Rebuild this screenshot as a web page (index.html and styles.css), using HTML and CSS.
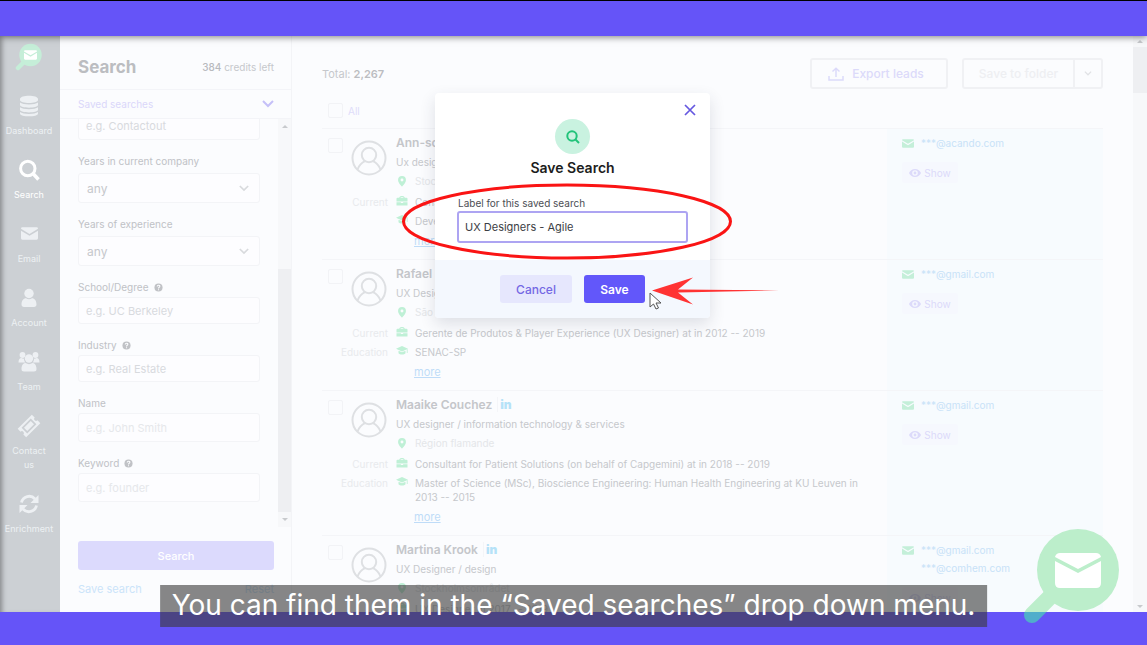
FILE: index.html
```
<!DOCTYPE html>
<html lang="en">
<head>
  <meta charset="UTF-8" />
  <meta name="viewport" content="width=device-width, initial-scale=1" />
  <title>Save Search</title>
  <link rel="stylesheet" href="styles.css">
</head>
<body>

  <!-- shared icons -->
  <svg class="sprite" aria-hidden="true">
    <symbol id="i-mail" viewBox="0 0 18 13">
      <path d="M1.5 0h15A1.5 1.5 0 0 1 18 1.500L9 7 0 1.500A1.500 1.500 0 0 1 1.500 0z" />
      <path d="M0 3.500L9 9l9-5.500v8a1.500 1.500 0 0 1-1.500 1.500h-15A1.500 1.500 0 0 1 0 11.500z" />
    </symbol>
    <symbol id="i-avatar" viewBox="0 0 36 36">
      <g fill="none" stroke="currentColor" stroke-width="2">
        <circle cx="18" cy="18" r="16.500" />
        <circle cx="18" cy="15" r="7.200" />
        <path d="M6.500 29.500C8.500 24.500 11 22.500 14 21.200M29.500 29.500c-2-5-4.500-7-7.500-8.300" />
      </g>
    </symbol>
    <symbol id="i-pin" viewBox="0 0 10 12">
      <path fill-rule="evenodd" d="M5 0a4.300 4.300 0 0 1 4.300 4.300C9.300 7.500 5 11.500 5 11.500S.7 7.500.7 4.300A4.300 4.300 0 0 1 5 0zm0 2.700a1.600 1.600 0 1 0 0 3.200 1.600 1.600 0 0 0 0-3.200z" />
    </symbol>
    <symbol id="i-case" viewBox="0 0 10 10">
      <path fill-rule="evenodd" d="M2.500 2.500C2.500.5 7.500.5 7.500 2.500H9a1 1 0 0 1 1 1v2.300H0V3.500a1 1 0 0 1 1-1zm1.200 0h2.600c0-.8-2.600-.8-2.600 0zM0 6.500h4v.8h2v-.8h4v3H0z" />
    </symbol>
    <symbol id="i-cap" viewBox="0 0 12 10">
      <path d="M6 .5l6 2.700-6 2.700-6-2.700zM2.500 5.200L6 6.800l3.500-1.600v2.500C8.500 9.500 3.500 9.500 2.500 7.700zM10.800 4l.8-.4v4h-.8z" />
    </symbol>
    <symbol id="i-eye" viewBox="0 0 12 8">
      <path fill-rule="evenodd" d="M6 0c3 0 5 2 6 4-1 2-3 4-6 4S1 6 0 4c1-2 3-4 6-4zm0 1.200a2.800 2.800 0 1 0 0 5.600 2.800 2.800 0 0 0 0-5.600zm0 1.400a1.400 1.400 0 1 1 0 2.800 1.400 1.400 0 0 1 0-2.800z" />
    </symbol>
    <symbol id="i-down" viewBox="0 0 12 8">
      <path d="M1 1l5 5 5-5" fill="none" stroke="currentColor" stroke-width="2" />
    </symbol>
    <symbol id="i-help" viewBox="0 0 10 10">
      <circle cx="5" cy="5" r="4.500" />
      <path d="M3.600 4c0-2 2.900-1.800 2.900-.3C6.500 4.800 5 4.700 5 6M5 7v1" fill="none" stroke="#fbfcfe" stroke-width="1.200" />
    </symbol>
  </svg>

  <div class="frame">
    <div class="band band-top"></div>

    <div class="app">
      <nav class="sidebar">
        <a href="#" class="brand" aria-label="Home">
          <svg width="28" height="28" viewBox="0 0 28 28">
            <path d="M3 25l7-7" stroke="#c5eed8" stroke-width="4.500" stroke-linecap="round" />
            <circle cx="15.500" cy="12" r="11.200" fill="#c5eed8" />
            <svg x="9" y="7" width="13" height="10" fill="#fff"><use href="#i-mail" /></svg>
          </svg>
        </a>
        <a href="#">
          <svg viewBox="0 0 24 24">
            <path d="M3 5c0-4.500 18-4.500 18 0v1c0 4-18 4-18 0zM3 8.500c3 2.500 15 2.500 18 0V11c0 3.500-18 3.500-18 0zM3 13.300c3 2.500 15 2.500 18 0v2.500c0 3.500-18 3.500-18 0zM3 18c3 2.500 15 2.500 18 0v1.500c0 3.800-18 3.800-18 0z" />
          </svg>
          <span>Dashboard</span>
        </a>
        <a href="#" class="active">
          <svg viewBox="0 0 24 24">
            <path d="M16 15.500l5.500 6" stroke="currentColor" stroke-width="3.500" />
            <circle cx="10.800" cy="10.500" r="7.200" fill="none" stroke="currentColor" stroke-width="3" />
          </svg>
          <span>Search</span>
        </a>
        <a href="#">
          <svg viewBox="0 0 24 24"><svg x="4" y="5" width="17" height="13"><use href="#i-mail" /></svg></svg>
          <span>Email</span>
        </a>
        <a href="#">
          <svg viewBox="0 0 24 24">
            <circle cx="12" cy="7.500" r="4.700" />
            <path d="M4.500 18.500c0-4 2-6.300 4.500-6.300 2 1.300 4 1.300 6 0 2.500 0 4.500 2.300 4.500 6.300 0 1.500-1 2.500-2.500 2.500H7c-1.500 0-2.500-1-2.500-2.500z" />
          </svg>
          <span>Account</span>
        </a>
        <a href="#">
          <svg viewBox="0 0 24 24">
            <circle cx="5.500" cy="5" r="2.900" />
            <circle cx="18.500" cy="5" r="2.900" />
            <circle cx="12" cy="8.500" r="4.200" />
            <path d="M1.500 12.500c0-3 1-4.500 3-4.500 1.500.8 2 .8 2.500.6 0 2 .5 3 1.500 4zM22.500 12.500c0-3-1-4.500-3-4.500-1.500.8-2 .8-2.500.6 0 2-.5 3-1.500 4z" />
            <path d="M4.500 19c0-4 2-6 4-6 2.500 1.500 4.500 1.500 7 0 2 0 4 2 4 6 0 1.800-1 2.500-2.500 2.500H7c-1.500 0-2.500-.7-2.500-2.500z" />
          </svg>
          <span>Team</span>
        </a>
        <a href="#">
          <svg viewBox="0 0 24 24">
            <g transform="rotate(-45 12 12)">
              <path fill-rule="evenodd" d="M2 6h20v4a2 2 0 0 0 0 4v4H2v-4a2 2 0 0 0 0-4zm3.500 2v8h13V8z" />
              <path d="M7.200 9.700h9.600v4.600H7.200z" />
            </g>
          </svg>
          <span>Contact<br>us</span>
        </a>
        <a href="#">
          <svg viewBox="0 0 24 24">
            <path d="M4.500 10.500A7.800 7.800 0 0 1 18 7M19.500 13.500A7.800 7.800 0 0 1 6 17" fill="none" stroke="currentColor" stroke-width="2.800" />
            <path d="M21.500 3v8h-8zM2.500 21v-8h8z" />
          </svg>
          <span>Enrichment</span>
        </a>
      </nav>

      <aside class="filters">
        <header class="filters-head">
          <h1>Search</h1>
          <span><b>384</b> credits left</span>
        </header>
        <button class="saved">Saved searches <svg width="12" height="8"><use href="#i-down" /></svg></button>

        <div class="filters-scroll">
          <form class="fields">
            <div class="field tall">
              <input type="text" aria-label="Company" placeholder="e.g. Contactout">
            </div>
            <div class="field pick">
              <label for="yearsCompany">Years in current company</label>
              <select id="yearsCompany"><option>any</option></select>
              <svg width="10" height="7"><use href="#i-down" /></svg>
            </div>
            <div class="field pick">
              <label for="yearsExp">Years of experience</label>
              <select id="yearsExp"><option>any</option></select>
              <svg width="10" height="7"><use href="#i-down" /></svg>
            </div>
            <div class="field">
              <label for="school">School/Degree <svg class="help"><use href="#i-help" /></svg></label>
              <input type="text" id="school" placeholder="e.g. UC Berkeley">
            </div>
            <div class="field">
              <label for="industry">Industry <svg class="help"><use href="#i-help" /></svg></label>
              <input type="text" id="industry" placeholder="e.g. Real Estate">
            </div>
            <div class="field tall light">
              <label for="name">Name</label>
              <input type="text" id="name" placeholder="e.g. John Smith">
            </div>
            <div class="field tall light">
              <label for="keyword">Keyword <svg class="help"><use href="#i-help" /></svg></label>
              <input type="text" id="keyword" placeholder="e.g. founder">
            </div>
          </form>
          <div class="scrollbar">
            <i class="arrow up"></i>
            <div class="thumb"></div>
            <i class="arrow down"></i>
          </div>
        </div>

        <div class="filters-foot">
          <button class="search-btn">Search</button>
          <div class="links">
            <a href="#">Save search</a>
            <a href="#">Reset</a>
          </div>
        </div>
      </aside>

      <main class="results">
        <header class="toolbar">
          <span class="total">Total: <b>2,267</b></span>
          <button class="export">
            <svg width="16" height="14" viewBox="0 0 16 14">
              <path d="M1 9v4h14V9M8 10V1.500M4.500 4.500L8 1.200l3.500 3.300" fill="none" stroke="currentColor" stroke-width="1.500" />
            </svg>
            Export leads
          </button>
          <div class="split">
            <button>Save to folder</button>
            <button aria-label="Choose folder"><svg width="8" height="5"><use href="#i-down" /></svg></button>
          </div>
        </header>

        <label class="all"><input type="checkbox"> All</label>

        <article class="lead">
          <input type="checkbox" aria-label="Select Ann-sofie">
          <svg class="avatar"><use href="#i-avatar" /></svg>
          <div class="info">
            <h2>Ann-sofie</h2>
            <p class="role">Ux designer / design</p>
            <p class="place"><svg><use href="#i-pin" /></svg>Stockholm</p>
            <p class="fact"><span>Current</span><svg><use href="#i-case" /></svg>Consultant</p>
            <p class="fact"><span></span><svg><use href="#i-cap" /></svg>Development</p>
            <a href="#">more</a>
          </div>
          <div class="contact">
            <p><svg><use href="#i-mail" /></svg>***@acando.com</p>
            <button><svg><use href="#i-eye" /></svg>Show</button>
          </div>
        </article>

        <article class="lead">
          <input type="checkbox" aria-label="Select Rafael">
          <svg class="avatar"><use href="#i-avatar" /></svg>
          <div class="info">
            <h2>Rafael Lima</h2>
            <p class="role">UX Designer</p>
            <p class="place"><svg><use href="#i-pin" /></svg>São Paulo</p>
            <p class="fact"><span>Current</span><svg><use href="#i-case" /></svg>Gerente de Produtos &amp; Player Experience (UX Designer) at in 2012 -- 2019</p>
            <p class="fact"><span>Education</span><svg><use href="#i-cap" /></svg>SENAC-SP</p>
            <a href="#">more</a>
          </div>
          <div class="contact">
            <p><svg><use href="#i-mail" /></svg>***@gmail.com</p>
            <button><svg><use href="#i-eye" /></svg>Show</button>
          </div>
        </article>

        <article class="lead">
          <input type="checkbox" aria-label="Select Maaike Couchez">
          <svg class="avatar"><use href="#i-avatar" /></svg>
          <div class="info">
            <h2>Maaike Couchez <b class="in">in</b></h2>
            <p class="role">UX designer / information technology &amp; services</p>
            <p class="place"><svg><use href="#i-pin" /></svg>Région flamande</p>
            <p class="fact"><span>Current</span><svg><use href="#i-case" /></svg>Consultant for Patient Solutions (on behalf of Capgemini) at in 2018 -- 2019</p>
            <div class="fact"><span>Education</span><svg><use href="#i-cap" /></svg><p>Master of Science (MSc), Bioscience Engineering: Human Health Engineering at KU Leuven in 2013 -- 2015</p></div>
            <a href="#">more</a>
          </div>
          <div class="contact">
            <p><svg><use href="#i-mail" /></svg>***@gmail.com</p>
            <button><svg><use href="#i-eye" /></svg>Show</button>
          </div>
        </article>

        <article class="lead">
          <input type="checkbox" aria-label="Select Martina Krook">
          <svg class="avatar"><use href="#i-avatar" /></svg>
          <div class="info">
            <h2>Martina Krook <b class="in">in</b></h2>
            <p class="role">UX Designer / design</p>
            <p class="place"><svg><use href="#i-pin" /></svg>Stockholmsområdet</p>
            <p class="fact"><span></span><svg><use href="#i-case" /></svg>UX Designer in 2017 -- 2019</p>
          </div>
          <div class="contact">
            <p><svg><use href="#i-mail" /></svg>***@gmail.com<br>***@comhem.com</p>
            <button><svg><use href="#i-eye" /></svg>Show</button>
          </div>
        </article>
      </main>

      <div class="scrollbar page-scroll">
        <i class="arrow up"></i>
        <div class="thumb"></div>
        <i class="arrow down"></i>
      </div>
    </div>

    <div class="band band-bottom"></div>

    <div class="overlay">
      <div class="modal" role="dialog" aria-labelledby="modalTitle">
        <button class="close" aria-label="Close">
          <svg width="12" height="12" viewBox="0 0 12 12"><path d="M1 1l10 10M11 1L1 11" stroke="currentColor" stroke-width="1.700" /></svg>
        </button>
        <div class="modal-body">
          <div class="badge">
            <svg width="14" height="14" viewBox="0 0 14 14">
              <circle cx="6" cy="6" r="4.700" fill="none" stroke="currentColor" stroke-width="2" />
              <path d="M9.500 9.500l3.500 3.500" stroke="currentColor" stroke-width="2" />
            </svg>
          </div>
          <h2 id="modalTitle">Save Search</h2>
          <label for="searchLabel">Label for this saved search</label>
          <input type="text" id="searchLabel" value="UX Designers - Agile">
        </div>
        <div class="modal-foot">
          <button class="cancel">Cancel</button>
          <button class="save">Save</button>
        </div>

        <!-- tutorial marks -->
        <svg class="marks" width="380" height="140" viewBox="0 0 380 140">
          <ellipse cx="166" cy="40.500" rx="163.500" ry="36.500" fill="none" stroke="#fa1414" stroke-width="3" />
          <path d="M251 109.500l41-13-15 12 101 1-101 2 15 12z" fill="#ff3333" />
          <path d="M249 112v14l3.500-3 2.500 5 2.500-1-2.500-5h5z" fill="#fff" stroke="#555" />
        </svg>
      </div>
    </div>

    <svg class="watermark" width="96" height="96" viewBox="0 0 96 96">
      <defs>
        <linearGradient id="handle" gradientUnits="userSpaceOnUse" x1="0" y1="0" x2="0" y2="96">
          <stop offset=".875" stop-color="#bceecb" />
          <stop offset=".875" stop-color="#50aecb" />
        </linearGradient>
      </defs>
      <path d="M9 87l20-20" stroke="url(#handle)" stroke-width="16" stroke-linecap="round" />
      <circle cx="55" cy="42" r="41" fill="#bceecb" />
      <svg x="32" y="25" width="46" height="35" viewBox="0 0 46 35" fill="#fff">
        <path d="M5 0h36q4 0 5 4L23 16 0 4q1-4 5-4z" />
        <path d="M0 8l23 12L46 8v22q0 5-5 5H5q-5 0-5-5z" />
      </svg>
    </svg>

    <p class="caption">You can find them in the “Saved searches” drop down menu.</p>
  </div>

</body>
</html>
```
FILE: styles.css
```
* {
  box-sizing: border-box;
}
body {
  font-family: Inter, "Liberation Sans", sans-serif;
  font-size: 11px;
  line-height: 14px;
  margin: 0;
  color: #c6c8cc;
}
h1, h2, p {
  margin: 0;
}
a {
  color: #bfdcf8;
  text-decoration: none;
}
button, input, select {
  font-family: inherit;
  font-size: inherit;
  color: inherit;
}
button {
  display: flex;
  align-items: center;
  justify-content: center;
  padding: 0;
  background: none;
  border: none;
  cursor: pointer;
}
:not(svg) > svg {
  fill: currentColor;
  flex-shrink: 0;
}
.sprite {
  position: absolute;
  width: 0;
  height: 0;
}
.frame {
  display: flex;
  flex-direction: column;
  height: 100vh;
  position: relative;
  overflow: hidden;
}
.band {
  background: #6554f8;
  flex-shrink: 0;
}
.band-top {
  height: 36px;
  border-top: 1px solid #000;
  box-shadow: 0 1px 7px rgba(0,0,0,0.5);
  z-index: 1;
}
.band-bottom {
  height: 33px;
}
.app {
  flex: 1;
  min-height: 0;
  display: flex;
  overflow: hidden;
  background: #fbfcfe;
}

/* left navigation */
.sidebar {
  width: 60px;
  flex-shrink: 0;
  display: flex;
  flex-direction: column;
  align-items: center;
  gap: 20px;
  padding: 7px 2px 0 0;
  background: #ccd0d4;
  box-shadow: inset 5px 0 5px -3px rgba(0,0,0,0.35);
}
.sidebar a {
  display: flex;
  flex-direction: column;
  align-items: center;
  gap: 6px;
  width: 50px;
  font-size: 9px;
  text-align: center;
  color: #edf0f3;
}
.sidebar a > svg {
  width: 24px;
  height: 24px;
}
.sidebar .brand {
  margin-bottom: 3px;
}
.sidebar .brand > svg {
  width: 28px;
  height: 28px;
}
.sidebar .active {
  color: #fff;
}

/* filters */
.filters {
  width: 232px;
  flex-shrink: 0;
  display: flex;
  flex-direction: column;
  border-right: 1px solid #f3f4f7;
}
.filters-head {
  display: flex;
  justify-content: space-between;
  align-items: center;
  height: 54px;
  padding: 8px 17px 0 18px;
  border-bottom: 1px solid #f3f4f8;
  font-size: 10px;
}
.filters-head h1 {
  font-size: 17px;
  color: #bbbdc1;
}
.filters-head b {
  font-weight: 500;
  color: #b8babe;
}
.saved {
  justify-content: space-between;
  height: 29px;
  padding: 0 17px 0 18px;
  border-bottom: 1px solid #f3f4f8;
  color: #dad7fa;
  font-size: 10px;
}
.saved svg {
  color: #c5c0f8;
}
.filters-scroll {
  flex: 1;
  min-height: 0;
  display: flex;
  justify-content: space-between;
  overflow: hidden;
}
.fields {
  display: flex;
  flex-direction: column;
  justify-content: flex-end;
  gap: 14px;
  width: 200px;
  padding: 0 0 25px 18px;
}
.field {
  display: flex;
  flex-direction: column;
  gap: 3px;
  position: relative;
}
.field label {
  font-size: 10px;
  display: flex;
  align-items: center;
  gap: 5px;
  color: #c0c2c6;
}
.help {
  width: 9px;
  height: 9px;
}
.field input,
.field select {
  width: 182px;
  height: 27px;
  padding: 0 7px;
  border: 1px solid #f3f4f7;
  border-radius: 3px;
  background: #fdfdff;
  font-size: 11px;
  appearance: none;
}
.field input::placeholder {
  color: #d8dade;
}
.field.tall input {
  height: 29px;
}
.field.light input::placeholder {
  color: #e6e8eb;
}
.pick {
  gap: 5px;
}
.field select {
  height: 30px;
  padding: 0 8px;
  font-size: 12px;
}
.pick svg {
  position: absolute;
  right: 11px;
  bottom: 11px;
  color: #d8dadd;
}
.filters-foot {
  padding: 14px 17px 16px 18px;
}
.search-btn {
  width: 100%;
  height: 29px;
  border-radius: 3px;
  background: #dcdafd;
  color: #fff;
  font-size: 11px;
  font-weight: 500;
}
.links {
  display: flex;
  justify-content: space-between;
  margin-top: 12px;
}
.links a {
  color: #cbe4fa;
}

/* scrollbars */
.scrollbar {
  display: flex;
  flex-direction: column;
  align-items: center;
  justify-content: space-between;
  width: 13px;
  background: #f7f8fa;
}
.thumb {
  width: 100%;
  height: 243px;
  margin-top: auto;
  background: #eeeff2;
}
.arrow {
  margin: 6px 0;
  border: 3px solid transparent;
}
.up {
  border-top: none;
  border-bottom-color: #c8cacd;
}
.down {
  border-bottom: none;
  border-top-color: #c8cacd;
}
.page-scroll {
  width: 14px;
  flex-shrink: 0;
}
.page-scroll .thumb {
  height: 46px;
  margin: 0 0 auto;
}
.page-scroll .arrow {
  margin: 4px 0;
}

/* results */
.results {
  flex: 1;
  min-width: 0;
  padding: 22px 30px 0;
}
.toolbar {
  display: flex;
  align-items: center;
}
.total {
  margin-right: auto;
}
.total b {
  font-weight: 600;
  color: #bbbdc1;
}
.export,
.split {
  height: 31px;
  border: 2px solid #f0f1f4;
  border-radius: 3px;
  font-size: 12px;
  font-weight: 500;
}
.export {
  width: 138px;
  gap: 8px;
  margin-right: 14px;
  padding-right: 6px;
  color: #dcdafa;
}
.split {
  display: flex;
  color: #eeeff2;
}
.split button {
  width: 109px;
  font-weight: 500;
}
.split button + button {
  width: 28px;
  border-left: 2px solid #f0f1f4;
  color: #e0e2e5;
}
.all {
  display: flex;
  align-items: center;
  gap: 5px;
  height: 40px;
  padding: 4px 0 0 6px;
  font-size: 10px;
  color: #dfdcfa;
  border-bottom: 1px solid #f4f5f8;
}
.results input {
  appearance: none;
  width: 15px;
  height: 15px;
  margin: 0;
  border: 1px solid #f2f3f6;
  border-radius: 2px;
}
.lead {
  display: grid;
  grid-template-columns: 23px 45px 1fr 216px;
  padding-left: 6px;
  border-bottom: 1px solid #f4f5f8;
}
.lead > input {
  margin-top: 9px;
}
.avatar {
  width: 36px;
  height: 36px;
  margin-top: 11px;
  color: #dee0e3;
}
.info {
  padding: 5px 20px 10px 0;
}
.info h2 {
  font-size: 12px;
  line-height: 18px;
  font-weight: 600;
  color: #c4c6ca;
}
.in {
  margin-left: 2px;
  padding-left: 2px;
  border-left: 1px solid #f4f5f8;
  color: #b5e2f8;
}
.role {
  font-size: 10px;
  line-height: 20px;
}
.place {
  display: flex;
  align-items: center;
  font-size: 10px;
  line-height: 18px;
  color: #e4e6e9;
}
.place svg,
.fact svg {
  width: 12px;
  height: 11px;
  margin-right: 7px;
  color: #bff0d6;
}
/* the Current / Education labels hang out under the avatar */
.fact {
  display: flex;
  align-items: flex-start;
  margin: 5px 0 0 -68px;
  font-size: 10px;
}
.fact span {
  width: 60px;
  flex-shrink: 0;
  margin-right: 8px;
  text-align: right;
  color: #e8eaed;
}
.info a {
  display: block;
  width: 28px;
  margin: 5px 0 0 18px;
  line-height: 16px;
  text-decoration: underline;
}
.contact {
  padding: 5px 0 0 15px;
  background: #f7fbfe;
  color: #c8e2f8;
  font-size: 10px;
}
.contact p {
  display: flex;
  line-height: 18px;
}
.contact p svg {
  width: 12px;
  height: 9px;
  margin: 5px 7px 0 0;
  color: #c4efd9;
}
.contact button {
  gap: 3px;
  width: 56px;
  height: 21px;
  margin-top: 10px;
  border-radius: 2px;
  background: #f6f8fe;
  color: #dcdafa;
}
.contact button svg {
  width: 12px;
  height: 8px;
}

/* dialog */
.overlay {
  position: absolute;
  inset: 93px 0 auto;
  z-index: 2;
  display: flex;
  justify-content: center;
  padding-right: 2px;
}
.modal {
  position: relative;
  width: 275px;
  border-radius: 4px;
  background: #fff;
  box-shadow: 0 6px 16px rgba(40,50,80,0.14);
}
.close {
  position: absolute;
  top: 11px;
  right: 14px;
  color: #6558e0;
}
.modal-body {
  display: flex;
  flex-direction: column;
  padding: 26px 22px 17px;
}
.badge {
  display: flex;
  align-items: center;
  justify-content: center;
  align-self: center;
  width: 35px;
  height: 35px;
  border-radius: 50%;
  background: #c9f2e0;
  color: #22c37a;
}
.modal h2 {
  margin: 4px 0 18px;
  font-size: 14px;
  line-height: 20px;
  font-weight: 600;
  text-align: center;
  color: #1c1d20;
}
.modal label {
  padding-left: 1px;
  font-size: 10px;
  color: #4c4e54;
}
.modal input {
  height: 32px;
  margin-top: 1px;
  padding: 0 6px;
  border: 2px solid #ada4f2;
  border-radius: 3px;
  background: #fff;
  color: #3c3e44;
}
.modal-foot {
  display: flex;
  justify-content: center;
  gap: 12px;
  height: 58px;
  padding: 15px 0;
  border-radius: 0 0 4px 4px;
  background: #f4f8fe;
}
.modal-foot button {
  border-radius: 3px;
  font-size: 12px;
  font-weight: 500;
}
.cancel {
  width: 72px;
  background: #e6e7fd;
  color: #7468e4;
}
.modal-foot .save {
  width: 61px;
  background: #6257fa;
  color: #fff;
  font-weight: 600;
}
.marks {
  position: absolute;
  left: -34px;
  top: 88px;
  pointer-events: none;
}

/* video layer */
.watermark {
  position: absolute;
  right: 28px;
  bottom: 21px;
}
.caption {
  position: absolute;
  left: 50%;
  bottom: 18px;
  transform: translateX(-50%);
  padding: 0 12px 2px;
  background: rgba(59,59,59,0.61);
  color: #fff;
  font-size: 28px;
  line-height: 40px;
  white-space: nowrap;
}
```
